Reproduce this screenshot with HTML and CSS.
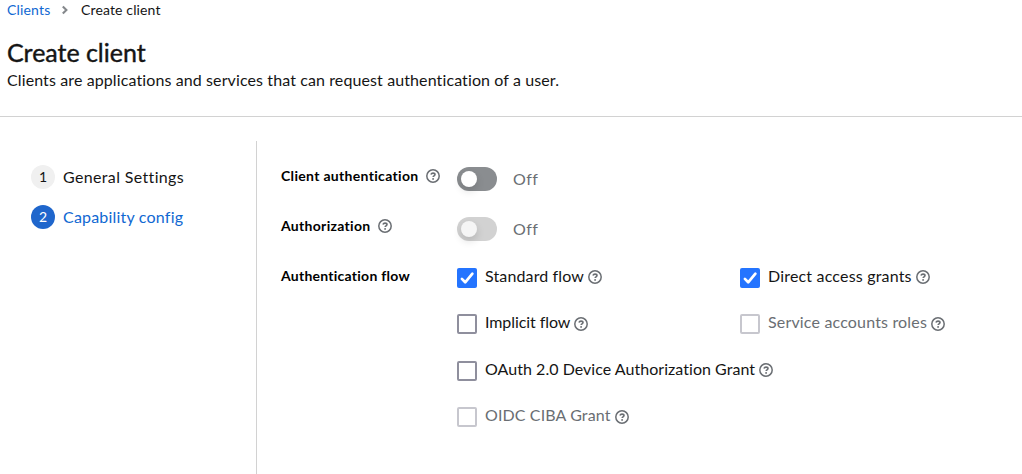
FILE: index.html
```html
<!DOCTYPE html>
<html lang="en">
<head>
<meta charset="utf-8">
<title>Create client</title>
<link rel="stylesheet" href="styles.css">
</head>
<body>
<svg class="defs" width="0" height="0" aria-hidden="true">
  <symbol id="help" viewBox="0 0 14 14">
    <circle cx="7" cy="7" r="6.2" fill="none" stroke="currentColor" stroke-width="1.500"/>
    <path d="M4.900 5.500C5.300 4.500 6 4.100 7 4.100c1.200 0 2 .6 2 1.500C9 6.900 7.200 6.800 7.200 8" fill="none" stroke="currentColor" stroke-width="1.600"/>
    <circle cx="7.100" cy="9.900" r=".95" fill="currentColor"/>
  </symbol>
  <symbol id="check" viewBox="0 0 20 20">
    <path d="M4.900 10.900 8.200 14.300 15.400 5.700" fill="none" stroke="#fff" stroke-width="2.700" stroke-linecap="round" stroke-linejoin="round"/>
  </symbol>
</svg>
<header class="page-header">
  <nav class="breadcrumb">
    <a class="crumb-link">Clients</a>
    <svg class="chevron" viewBox="0 0 8 10"><path d="M1.800 1.400 5.400 5 1.800 8.600" fill="none" stroke="#85888c" stroke-width="2.100"/></svg>
    <span class="crumb-current">Create client</span>
  </nav>
  <h1 class="title">Create client</h1>
  <p class="subtitle">Clients are applications and services that can request authentication of a user.</p>
</header>
<main class="wizard">
  <ol class="steps">
    <li class="step"><span class="step-number">1</span><span class="general">General Settings</span></li>
    <li class="step current"><span class="step-number">2</span><span class="capability">Capability config</span></li>
  </ol>
  <form class="form">
    <div class="row">
      <div class="label"><span class="l-client">Client authentication</span><svg class="help"><use href="#help"/></svg></div>
      <div class="toggle"><span class="knob"></span></div><span class="state">Off</span>
    </div>
    <div class="row">
      <div class="label"><span class="l-auth">Authorization</span><svg class="help"><use href="#help"/></svg></div>
      <div class="toggle off-disabled"><span class="knob"></span></div><span class="state">Off</span>
    </div>
    <div class="row flow-row">
      <div class="label"><span class="l-flow">Authentication flow</span></div>
      <div class="options">
        <div class="option"><span class="box checked"><svg><use href="#check"/></svg></span><span class="text standard">Standard flow</span><svg class="help"><use href="#help"/></svg></div>
        <div class="option"><span class="box checked"><svg><use href="#check"/></svg></span><span class="text direct">Direct access grants</span><svg class="help"><use href="#help"/></svg></div>
        <div class="option low"><span class="box"></span><span class="text implicit">Implicit flow</span><svg class="help"><use href="#help"/></svg></div>
        <div class="option low disabled"><span class="box"></span><span class="text service">Service accounts roles</span><svg class="help"><use href="#help"/></svg></div>
        <div class="option wide"><span class="box"></span><span class="text oauth">OAuth 2.0 Device Authorization Grant</span><svg class="help"><use href="#help"/></svg></div>
        <div class="option wide low disabled"><span class="box"></span><span class="text oidc">OIDC CIBA Grant</span><svg class="help"><use href="#help"/></svg></div>
      </div>
    </div>
  </form>
</main>
</body>
</html>
```
FILE: styles.css
```css
* { box-sizing: border-box; }
body { margin: 0; height: 474px; overflow: hidden; background: #fff; color: #151515; font: 16px/24px Lato, "Open Sans", sans-serif; font-variant-ligatures: none; display: flex; flex-direction: column; white-space: nowrap; }
.defs { display: none; }
svg { display: block; flex: none; }
.page-header { height: 117px; flex: none; border-bottom: 1px solid #d2d2d2; padding-left: 7px; }
.breadcrumb { display: flex; align-items: center; height: 20px; font-size: 14px; line-height: 20px; }
.crumb-link { width: 54px; color: #1068d2; letter-spacing: .17px; }
.crumb-current { letter-spacing: .14px; }
.chevron { width: 8px; height: 10px; margin-right: 12px; }
.title { margin: 17px 0 0; height: 31px; font-size: 25px; line-height: 31px; font-weight: 400; letter-spacing: -.03px; -webkit-text-stroke: .4px #151515; }
.subtitle { margin: 0; letter-spacing: .11px; }
.wizard { display: flex; flex: 1; }
.steps { list-style: none; margin: 24px 0 0; padding: 24px 0 0 31px; width: 257px; border-right: 1px solid #d2d2d2; }
.step { display: flex; align-items: center; height: 24px; margin-bottom: 16px; gap: 8px; }
.step-number { width: 24px; height: 24px; border-radius: 50%; background: #f0f0f0; font-size: 14px; text-align: center; line-height: 24px; }
.current { color: #1068d2; }
.current .step-number { background: #1f66cc; color: #fff; }
.general { letter-spacing: .35px; }
.capability { letter-spacing: .2px; }
.form { padding: 46px 0 0 24px; }
.row { display: flex; height: 50px; }
.label { width: 176px; height: 26px; display: flex; align-items: center; font-size: 14px; font-weight: 700; color: #000; }
.l-client { letter-spacing: .32px; }
.l-auth { letter-spacing: .3px; }
.l-flow { letter-spacing: .25px; }
.help { width: 14px; height: 14px; color: #6a6e73; }
.label .help { margin-left: 7.300px; }
.toggle { width: 40px; height: 24px; margin-top: 4px; padding: 4px; border-radius: 12px; background: #8a8d90; }
.knob { display: block; width: 16px; height: 16px; border-radius: 50%; background: #fff; box-shadow: 0 4px 8px rgba(3, 3, 3, .14); }
.off-disabled { background: #d2d2d2; }
.off-disabled .knob { background: #f5f5f5; }
.state { margin: 4px 0 0 16px; color: #6a6e73; letter-spacing: .4px; }
.flow-row { height: auto; }
.options { display: grid; grid-template-columns: 283px 1fr; grid-template-rows: 46px 47px 46px 46px; padding-top: 1px; }
.option { display: flex; height: 24px; align-items: center; }
.wide { grid-column: 1 / -1; }
.box { width: 20px; height: 20px; margin: 3px 8px 0 0; border: 2px solid #8f8f9d; border-radius: 2px; flex: none; }
.box svg { width: 20px; height: 20px; }
.checked { border: 0; background: #2474ff; }
.option .help { margin: 2px 0 0 4px; }
.option.low .help { margin-top: 4px; }
.standard { letter-spacing: .13px; }
.direct { letter-spacing: .18px; }
.implicit { letter-spacing: -.08px; }
.service { letter-spacing: .17px; }
.oauth { letter-spacing: .04px; }
.oidc { letter-spacing: .12px; }
.disabled { color: #6a6e73; }
.disabled .box { border-color: #c7c7ce; }
```
